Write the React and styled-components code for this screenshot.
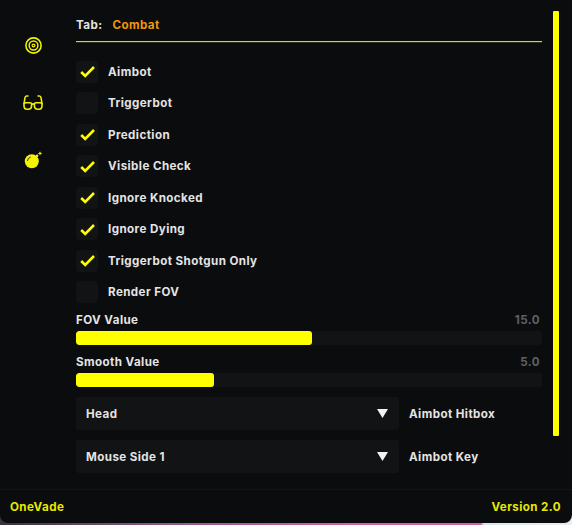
import React from "react";
import styled, { createGlobalStyle } from "styled-components";

const Global = createGlobalStyle`
  html, body { margin: 0; padding: 0; background: #0b0c0e; }
  body { width: 572px; height: 525px; overflow: hidden; font-family: Inter, "Liberation Sans", sans-serif; }
`;
const Backdrop = styled.div`
  width: 572px; height: 525px;
  background: linear-gradient(90deg, #3a3040 0%, #8f5a90 30%, #d060a8 60%, #d060a8 84%, #d8e8f0 84.6%, #e8eef2 100%);
`;
const Window = styled.div`
  width: 572px; height: 523px; background: #0b0c0e;
  border-radius: 0 0 8px 8px;
  display: grid; grid-template-rows: 489px 34px;
`;
const Body = styled.div`
  display: grid; grid-template-columns: 66px 476px 30px;
`;
const Rail = styled.nav`
  display: flex; flex-direction: column; align-items: center; gap: 41px; padding-top: 37px;
`;
const Main = styled.main`
  margin-left: 10px; width: 466px;
  display: flex; flex-direction: column;
`;
const TabBar = styled.div`
  height: 42px; box-sizing: border-box; padding-top: 18px;
  border-bottom: 1px solid #d8d81c;
  box-shadow: 0 1px 0 #2f2f10;
  display: flex; gap: 10px; font-size: 11.6px; line-height: 14px; font-weight: 700; letter-spacing: .42px;
`;
const TabLabel = styled.span` color: #e4e4e4; `;
const TabName = styled.span` color: #f0980a; `;
const Checks = styled.div`
  display: flex; flex-direction: column; gap: 9.5px; margin-top: 18.5px;
`;
const CheckRow = styled.label`
  display: flex; align-items: center; gap: 10px; height: 22px;
  font-size: 11.6px; font-weight: 700; letter-spacing: .42px; color: #e4e4e4;
`;
const Box = styled.span`
  width: 22px; height: 22px; border-radius: 4px; background: #121315;
  display: flex; align-items: center; justify-content: center;
`;
const Slider = styled.div`
  display: flex; flex-direction: column; margin-top: 9px;
`;
const SliderHead = styled.div`
  display: flex; justify-content: space-between; height: 15px; line-height: 17px;
  font-size: 11.6px; font-weight: 700; letter-spacing: .42px; color: #e4e4e4;
`;
const SliderValue = styled.span` color: #5f6062; padding-right: 2px; `;
const Track = styled.div`
  height: 14px; margin-top: 4px; border-radius: 3px; background: #121315; overflow: hidden;
`;
const Fill = styled.div`
  height: 100%; background: #ffff00; border-radius: 3px;
`;
const SelectRow = styled.div`
  display: flex; align-items: center; gap: 10px; margin-top: 10px;
  font-size: 11.6px; font-weight: 700; letter-spacing: .42px; color: #e4e4e4;
`;
const Select = styled.div`
  width: 323px; height: 33px; box-sizing: border-box; padding: 0 11px 0 10px;
  background: #121315; border-radius: 3px;
  display: flex; align-items: center; justify-content: space-between;
`;
const ScrollCol = styled.div`
  padding: 11px 0 0 11px;
`;
const Thumb = styled.div`
  width: 6px; height: 425px; background: #ffff00; border-radius: 1px;
`;
const Footer = styled.footer`
  border-top: 1px solid #141518;
  display: flex; justify-content: space-between; align-items: center;
  padding: 0 11px 0 10px;
  font-size: 11.6px; font-weight: 700; letter-spacing: .42px; color: #e8e800;
`;

const Check = () => (
  <svg width="15" height="13" viewBox="0 0 15 13">
    <path d="M1.2 7 L5.2 11 L14 2" fill="none" stroke="#ffff00" strokeWidth="2.6" />
  </svg>
);
const Caret = () => (
  <svg width="11" height="9" viewBox="0 0 11 9"><path d="M0 0 H11 L5.5 9 Z" fill="#f2f2f2" /></svg>
);
const Target = () => (
  <svg width="17" height="17" viewBox="0 0 17 17" fill="none" stroke="#f0f000">
    <circle cx="8.5" cy="8.5" r="7.6" strokeWidth="1.6" />
    <circle cx="8.5" cy="8.5" r="4.4" strokeWidth="1.5" />
    <circle cx="8.5" cy="8.5" r="1.4" strokeWidth="1.2" />
  </svg>
);
const Glasses = () => (
  <svg width="20" height="15" viewBox="0 0 20 15" fill="none" stroke="#f0f000" strokeWidth="1.6">
    <path d="M5.5 1 H3.6 Q2.2 1 1.9 3 L1 9" />
    <path d="M14.5 1 H16.4 Q17.8 1 18.1 3 L19 9" />
    <path d="M1 9 Q1 7.8 3 7.8 H7 Q8.6 7.8 8.6 9.4 V10.5 Q8.6 14.2 5.2 14.2 H4 Q1 14.2 1 10.5 Z" />
    <path d="M19 9 Q19 7.8 17 7.8 H13 Q11.4 7.8 11.4 9.4 V10.5 Q11.4 14.2 14.8 14.2 H16 Q19 14.2 19 10.5 Z" />
    <path d="M8.6 9.4 Q10 8.4 11.4 9.4" />
  </svg>
);
const Bomb = () => (
  <svg width="19" height="18" viewBox="0 0 19 18">
    <circle cx="7.8" cy="10.2" r="7" fill="#f5f500" />
    <path d="M11.5 4.5 L13.2 3.2 L14.6 4.8 L13.2 6.4 Z" fill="#f5f500" />
    <path d="M16 .2 L16.7 1.8 L18.4 2.4 L16.7 3 L16 4.6 L15.3 3 L13.7 2.4 L15.3 1.8 Z" fill="#f5f500" />
    <path d="M3.4 10 Q3.7 6.8 6.7 6" fill="none" stroke="#0b0c0e" strokeWidth=".8" />
  </svg>
);

const options = [
  ["Aimbot", true], ["Triggerbot", false], ["Prediction", true], ["Visible Check", true],
  ["Ignore Knocked", true], ["Ignore Dying", true], ["Triggerbot Shotgun Only", true], ["Render FOV", false],
];

export default function App() {
  return (
    <Backdrop>
      <Global />
      <Window>
        <Body>
          <Rail><Target /><Glasses /><Bomb /></Rail>
          <Main>
            <TabBar><TabLabel>Tab:</TabLabel><TabName>Combat</TabName></TabBar>
            <Checks>
              {options.map(([t, on]) => (
                <CheckRow key={t}><Box>{on && <Check />}</Box>{t}</CheckRow>
              ))}
            </Checks>
            <Slider>
              <SliderHead><span>FOV Value</span><SliderValue>15.0</SliderValue></SliderHead>
              <Track><Fill style={{ width: "50.7%" }} /></Track>
            </Slider>
            <Slider>
              <SliderHead><span>Smooth Value</span><SliderValue>5.0</SliderValue></SliderHead>
              <Track><Fill style={{ width: "29.6%" }} /></Track>
            </Slider>
            <SelectRow><Select>Head<Caret /></Select>Aimbot Hitbox</SelectRow>
            <SelectRow><Select>Mouse Side 1<Caret /></Select>Aimbot Key</SelectRow>
          </Main>
          <ScrollCol><Thumb /></ScrollCol>
        </Body>
        <Footer><span>OneVade</span><span>Version 2.0</span></Footer>
      </Window>
    </Backdrop>
  );
}
